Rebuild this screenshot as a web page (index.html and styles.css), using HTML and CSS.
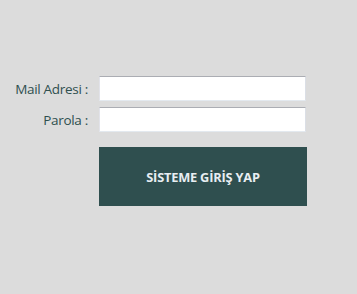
FILE: index.html
```html
<!DOCTYPE html>
<html lang="tr">
<head>
<meta charset="utf-8">
<link rel="stylesheet" href="styles.css">
</head>
<body>
<form class="login">
  <label class="label" for="mail">Mail Adresi :</label>
  <input class="field" id="mail" type="text">
  <label class="label" for="pass">Parola :</label>
  <input class="field" id="pass" type="password">
  <div class="spacer"></div>
  <button class="submit" type="button">SİSTEME GİRİŞ YAP</button>
</form>
</body>
</html>
```
FILE: styles.css
```css
html, body {
  margin: 0;
  padding: 0;
  background: #dcdcdc;
  width: 357px;
  height: 294px;
  overflow: hidden;
}
.login {
  display: grid;
  grid-template-columns: 88px 208px;
  column-gap: 11px;
  row-gap: 6px;
  padding-top: 76px;
  font-family: "Open Sans", "Noto Sans", sans-serif;
}
.label {
  text-align: right;
  align-self: center;
  font-size: 13.5px;
  color: #2f4f4f;
  letter-spacing: -0.3px;
}
.field {
  box-sizing: border-box;
  height: 25px;
  width: 207px;
  margin: 0;
  background: #fff;
  border: 1px solid #e3e9ef;
  border-top-color: #abadb3;
  border-left-color: #e2e3ea;
  border-right-color: #dbdfe6;
  padding: 0 4px;
  outline: none;
}
.submit {
  grid-column: 2;
  margin-top: 9px;
  height: 59px;
  width: 208px;
  border: 0;
  background: #2f4f4f;
  color: #e8eef2;
  font-family: "Open Sans", "Noto Sans", sans-serif;
  font-weight: 700;
  font-size: 12.8px;
  letter-spacing: -0.2px;
  padding: 0;
}
```
